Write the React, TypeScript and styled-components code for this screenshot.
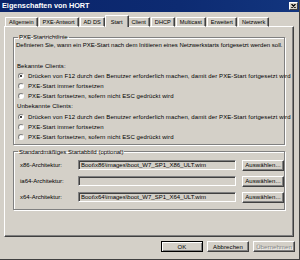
import React from "react";
import styled, { createGlobalStyle } from "styled-components";

const clrs = {
    face: "#d4d0c8",
    shadow: "#808080",
    dark: "#404040",
    light: "#ffffff",
    title: "#0a246a",
};

const GlobalStyle = createGlobalStyle`
    html, body {
        margin: 0;
        padding: 0;
        background: ${clrs.face};
    }
    body {
        font-family: "Liberation Sans", Arial, sans-serif;
        font-size: 6px;
        color: #000;
    }
`;

const Window = styled.div`
    width: 300px;
    height: 260px;
    box-sizing: border-box;
    background: ${clrs.face};
    border-right: 1px solid ${clrs.dark};
    border-bottom: 1px solid ${clrs.dark};
    display: flex;
    flex-direction: column;
    overflow: hidden;
`;

const TitleBar = styled.div`
    height: 12px;
    flex: none;
    display: flex;
    align-items: center;
    justify-content: space-between;
    padding: 0 1px 0 2px;
    background: linear-gradient(90deg, #0a246a 0%, #0d2b72 60%, #12357e 100%);
`;

const Title = styled.span`
    color: #fff;
    font-weight: bold;
    font-size: 7.3px;
    line-height: 12px;
    white-space: nowrap;
`;

const CloseButton = styled.div`
    width: 9px;
    height: 8px;
    box-sizing: border-box;
    background: ${clrs.face};
    border: 1px solid;
    border-color: ${clrs.light} ${clrs.dark} ${clrs.dark} ${clrs.light};
    display: flex;
    align-items: center;
    justify-content: center;
    svg {
        display: block;
    }
`;

const TabRow = styled.div`
    display: flex;
    align-items: flex-end;
    padding: 4px 0 0 5px;
    height: 15px;
    box-sizing: border-box;
    margin-bottom: -1px;
    font-size: 5.6px;
`;

const Tab = styled.div<{ $active?: boolean }>`
    position: relative;
    z-index: ${(p) => (p.$active ? 2 : 1)};
    height: ${(p) => (p.$active ? "12px" : "10px")};
    box-sizing: border-box;
    padding: 0 ${(p) => (p.$active ? "5px" : "3px")};
    margin-left: ${(p) => (p.$active ? "-1px" : "0")};
    margin-right: ${(p) => (p.$active ? "-1px" : "1px")};
    background: ${clrs.face};
    border-top: 1px solid ${clrs.light};
    border-left: 1px solid ${clrs.light};
    border-right: 1px solid ${clrs.dark};
    border-bottom: ${(p) => (p.$active ? "none" : `1px solid ${clrs.light}`)};
    border-radius: 1px 1px 0 0;
    box-shadow: inset -1px 0 0 ${clrs.shadow};
    line-height: 8px;
    white-space: nowrap;
    display: flex;
    align-items: center;
`;

const Panel = styled.div`
    height: 211px;
    flex: none;
    margin: 0 5px 0 4px;
    box-sizing: border-box;
    border-top: 1px solid ${clrs.light};
    border-left: 1px solid ${clrs.light};
    border-right: 1px solid ${clrs.dark};
    border-bottom: 1px solid ${clrs.dark};
    box-shadow: inset -1px -1px 0 ${clrs.shadow};
    padding: 6px 8px 0 8px;
    display: flex;
    flex-direction: column;
`;

const Group = styled.fieldset<{ $gap?: number }>`
    margin: ${(p) => p.$gap ?? 0}px 0 0 0;
    padding: 0 2px 2px 2px;
    border: 1px solid ${clrs.shadow};
    box-shadow: inset 1px 1px 0 ${clrs.light}, 1px 1px 0 ${clrs.light};
    min-width: 0;
`;

const Legend = styled.legend`
    margin-left: 2px;
    padding: 0 1px;
    line-height: 8px;
    white-space: nowrap;
`;

const Text = styled.div<{ $gap?: number }>`
    line-height: 8px;
    margin-top: ${(p) => p.$gap ?? 0}px;
    white-space: nowrap;
`;

const Heading = styled.div<{ $gap?: number }>`
    height: 10.1px;
    line-height: 10px;
    margin-top: ${(p) => p.$gap ?? 0}px;
    padding-left: 1px;
    letter-spacing: 0.1px;
    white-space: nowrap;
`;

const RadioRow = styled.label`
    height: 10.1px;
    display: flex;
    align-items: center;
    gap: 4px;
    padding-left: 2px;
    letter-spacing: 0.1px;
    white-space: nowrap;
`;

const RadioDot = styled.span<{ $checked?: boolean }>`
    width: 6px;
    height: 6px;
    flex: none;
    box-sizing: border-box;
    border-radius: 50%;
    border: 1px solid;
    border-color: ${clrs.shadow} ${clrs.light} ${clrs.light} ${clrs.shadow};
    background: #fff;
    display: flex;
    align-items: center;
    justify-content: center;
    &::after {
        content: "";
        width: 2px;
        height: 2px;
        border-radius: 50%;
        background: ${(p) => (p.$checked ? "#000" : "transparent")};
    }
`;

const ImageRows = styled.div`
    display: flex;
    flex-direction: column;
    gap: 5px;
    padding: 4px;
`;

const ImageRow = styled.div`
    display: grid;
    grid-template-columns: 52px 158px 42px;
    column-gap: 6px;
    align-items: center;
    height: 11px;
`;

const FieldLabel = styled.span`
    white-space: nowrap;
`;

const TextBox = styled.div`
    height: 10px;
    box-sizing: border-box;
    border: 1px solid;
    border-color: ${clrs.shadow} ${clrs.light} ${clrs.light} ${clrs.shadow};
    box-shadow: inset 1px 1px 0 ${clrs.dark};
    background: ${clrs.face};
    padding-left: 2px;
    line-height: 8px;
    white-space: nowrap;
    overflow: hidden;
`;

const Button = styled.div<{ $default?: boolean; $disabled?: boolean }>`
    height: 11px;
    width: 42px;
    box-sizing: border-box;
    border: 1px solid;
    border-color: ${(p) =>
        p.$default ? "#000" : `${clrs.light} ${clrs.dark} ${clrs.dark} ${clrs.light}`};
    box-shadow: ${(p) =>
        p.$default
            ? `inset 1px 1px 0 ${clrs.light}, inset -1px -1px 0 ${clrs.shadow}`
            : `inset -1px -1px 0 ${clrs.shadow}`};
    background: ${clrs.face};
    display: flex;
    align-items: center;
    justify-content: center;
    line-height: 8px;
    letter-spacing: 0.1px;
    white-space: nowrap;
    color: ${(p) => (p.$disabled ? clrs.shadow : "#000")};
    text-shadow: ${(p) => (p.$disabled ? `1px 1px 0 ${clrs.light}` : "none")};
`;

const Footer = styled.div`
    display: flex;
    justify-content: flex-end;
    gap: 4px;
    padding: 4px 4px 0 0;
`;

const tabs = ["Allgemein", "PXE-Antwort", "AD DS", "Start", "Client", "DHCP", "Multicast", "Erweitert", "Netzwerk"];

const options = [
    "Drücken von F12 durch den Benutzer erforderlich machen, damit der PXE-Start fortgesetzt wird",
    "PXE-Start immer fortsetzen",
    "PXE-Start fortsetzen, sofern nicht ESC gedrückt wird",
];

const images = [
    { label: "x86-Architektur:", path: "Boot\\x86\\images\\boot_W7_SP1_X86_ULT.wim" },
    { label: "ia64-Architektur:", path: "" },
    { label: "x64-Architektur:", path: "Boot\\x64\\images\\boot_W7_SP1_X64_ULT.wim" },
];

const RadioGroup: React.FC<{ selected: number }> = ({ selected }) => (
    <>
        {options.map((o, i) => (
            <RadioRow key={o}>
                <RadioDot $checked={i === selected} />
                {o}
            </RadioRow>
        ))}
    </>
);

const App: React.FC = () => {
    return (
        <Window>
            <GlobalStyle />
            <TitleBar>
                <Title>Eigenschaften von HORT</Title>
                <CloseButton>
                    <svg width="5" height="4" viewBox="0 0 5 4">
                        <path d="M0.5 0L4.5 4M4.5 0L0.5 4" stroke="#000" strokeWidth="1.2" />
                    </svg>
                </CloseButton>
            </TitleBar>
            <TabRow>
                {tabs.map((t) => (
                    <Tab key={t} $active={t === "Start"}>
                        {t}
                    </Tab>
                ))}
            </TabRow>
            <Panel>
                <Group>
                    <Legend>PXE-Startrichtlinie</Legend>
                    <Text>
                        Definieren Sie, wann ein PXE-Start nach dem Initiieren eines Netzwerkstarts fortgesetzt
                        werden soll.
                    </Text>
                    <Heading $gap={12}>Bekannte Clients:</Heading>
                    <RadioGroup selected={0} />
                    <Heading>Unbekannte Clients:</Heading>
                    <RadioGroup selected={0} />
                </Group>
                <Group $gap={3}>
                    <Legend>Standardmäßiges Startabbild (optional)</Legend>
                    <ImageRows>
                        {images.map((img) => (
                            <ImageRow key={img.label}>
                                <FieldLabel>{img.label}</FieldLabel>
                                <TextBox>{img.path}</TextBox>
                                <Button>Auswählen...</Button>
                            </ImageRow>
                        ))}
                    </ImageRows>
                </Group>
            </Panel>
            <Footer>
                <Button $default>OK</Button>
                <Button>Abbrechen</Button>
                <Button $disabled>Übernehmen</Button>
            </Footer>
        </Window>
    );
};

export default App;
